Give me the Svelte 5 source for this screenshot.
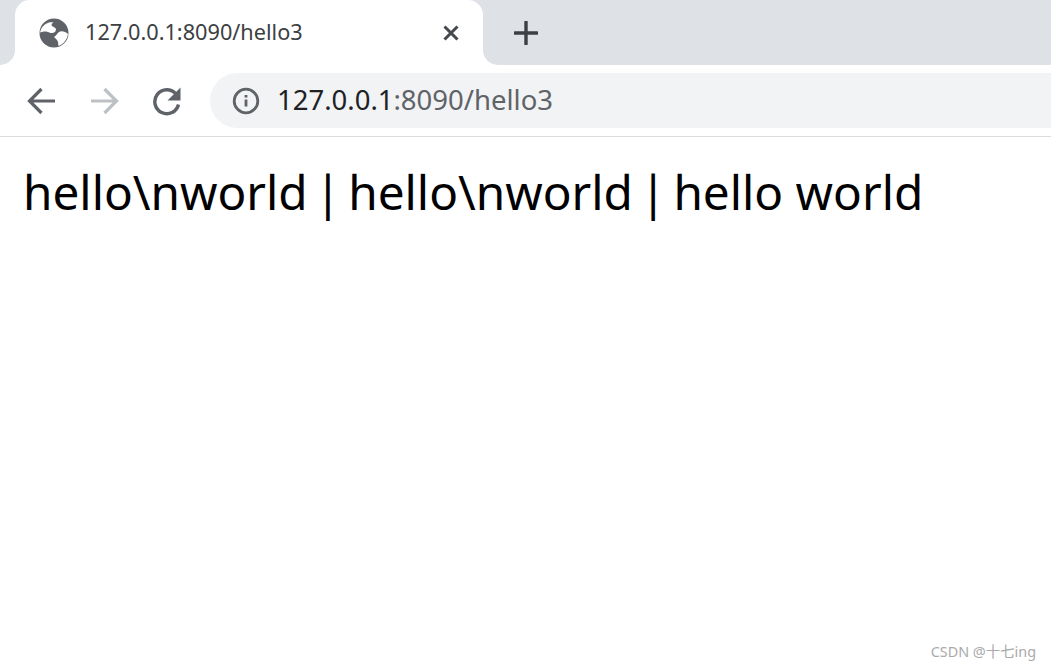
<script>
    let host = '127.0.0.1';
    let path = ':8090/hello3';
    let parts = ['hello\\nworld', 'hello\\nworld', 'hello world'];
</script>

<div class="page">
    <div class="strip">
        <div class="edge left"></div>
        <div class="tab">
            <svg class="globe" width="30" height="30" viewBox="0 0 30 30">
                <circle cx="15" cy="15" r="14.5" fill="#5f6368" />
                <path d="M1 15.500C1.500 10 5 6 10 4.500c1.500-.5 3-.5 4.500 0-2 1-2.500 2.500-1.500 3.500 1.500 1 4 1.500 4 3.500 0 2-2 3.500-4 3.500-2 0-3.500-1-5-1.300-2.500-.5-5.500 0-7.500 1.300z" fill="#fff" />
                <path d="M29 16c-3-3-7-3.500-9-2-2 1.500-3 4-5 5 2 2 3.500 3 4 5l.5 4c4.500-1.500 8.500-6 9.500-12z" fill="#fff" />
            </svg>
            <span class="title">{host}{path}</span>
            <svg class="close" width="16" height="16" viewBox="0 0 16 16">
                <path d="M1.500 1.500l13 13M14.500 1.500l-13 13" stroke="#45484d" stroke-width="3" fill="none" />
            </svg>
        </div>
        <div class="edge right">
            <svg class="plus" width="24" height="24" viewBox="0 0 24 24">
                <path d="M12 1v22M1 12h22" stroke="#3c4043" stroke-width="3.400" stroke-linecap="round" fill="none" />
            </svg>
        </div>
    </div>

    <div class="toolbar">
        <div class="nav">
            <svg width="30" height="30" viewBox="0 0 30 30">
                <path d="M28 15H4M14.500 3L2.500 15l12 12" stroke="#5f6368" stroke-width="3.200" fill="none" />
            </svg>
            <svg width="30" height="30" viewBox="0 0 30 30">
                <path d="M2 15h24M15.500 3l12 12-12 12" stroke="#bdc1c6" stroke-width="3.200" fill="none" />
            </svg>
            <svg class="reload" width="30" height="30" viewBox="0 0 30 30">
                <path d="M24 8A12 12 0 1 0 26.500 18.500" stroke="#5f6368" stroke-width="3.400" fill="none" />
                <path d="M28.500 1.500v13h-13z" fill="#5f6368" />
            </svg>
        </div>
        <div class="omnibox">
            <svg width="28" height="28" viewBox="0 0 28 28">
                <circle cx="14" cy="14" r="11.800" stroke="#5f6368" stroke-width="2.800" fill="none" />
                <path d="M14 12.500v7M14 8v2.500" stroke="#5f6368" stroke-width="2.800" fill="none" />
            </svg>
            <span class="url"><span class="host">{host}</span>{path}</span>
        </div>
    </div>

    <main>
        {#each parts as part, i}{#if i > 0}<span class="sep">{' | '}</span>{/if}{part}{/each}
    </main>

    <footer>CSDN @十七ing</footer>
</div>

<style>
    :global(body) {
        background: #fff;
    }

    .page {
        height: 669px;
        display: flex;
        flex-direction: column;
        overflow: hidden;
        font-family: "Noto Sans", "Noto Sans CJK SC", sans-serif;
    }

    .strip {
        height: 65px;
        display: flex;
        background: linear-gradient(#dee1e6 50%, #fff 50%);
    }

    .edge {
        background: #dee1e6;
    }

    .edge.left {
        width: 15px;
        border-bottom-right-radius: 15px;
    }

    .edge.right {
        flex: 1;
        display: flex;
        align-items: center;
        border-bottom-left-radius: 15px;
        padding-left: 31px;
    }

    .tab {
        width: 468px;
        display: flex;
        align-items: center;
        background: #fff;
        border-radius: 15px 15px 0 0;
        padding-left: 24px;
        box-sizing: border-box;
    }

    .title {
        margin-left: 16px;
        padding-bottom: 2px;
        font-size: 21.7px;
        color: #3c4043;
        flex: 1;
    }

    .close {
        margin-right: 24px;
    }

    .toolbar {
        height: 72px;
        box-sizing: border-box;
        display: flex;
        align-items: center;
        gap: 29px;
        padding-left: 27px;
        border-bottom: 1px solid #dadce0;
    }

    .nav {
        display: flex;
        gap: 32px;
    }

    .reload {
        margin-left: 1px;
        margin-right: -1px;
    }

    .omnibox {
        flex: 1;
        height: 55px;
        margin-right: -40px;
        display: flex;
        align-items: center;
        gap: 17px;
        padding-left: 22px;
        background: #f1f3f4;
        border-radius: 28px;
    }

    .url {
        padding-bottom: 2px;
        font-size: 27.5px;
        color: #5f6368;
    }

    .host {
        color: #202124;
    }

    main {
        flex: 1;
        padding: 19px 23px;
        font-size: 47.7px;
        line-height: 72px;
        color: #000;
        white-space: pre;
    }

    .sep {
        word-spacing: -5.300px;
    }

    footer {
        align-self: flex-end;
        padding: 0 15px 8px 0;
        font-size: 14.4px;
        color: #aaa;
    }
</style>
